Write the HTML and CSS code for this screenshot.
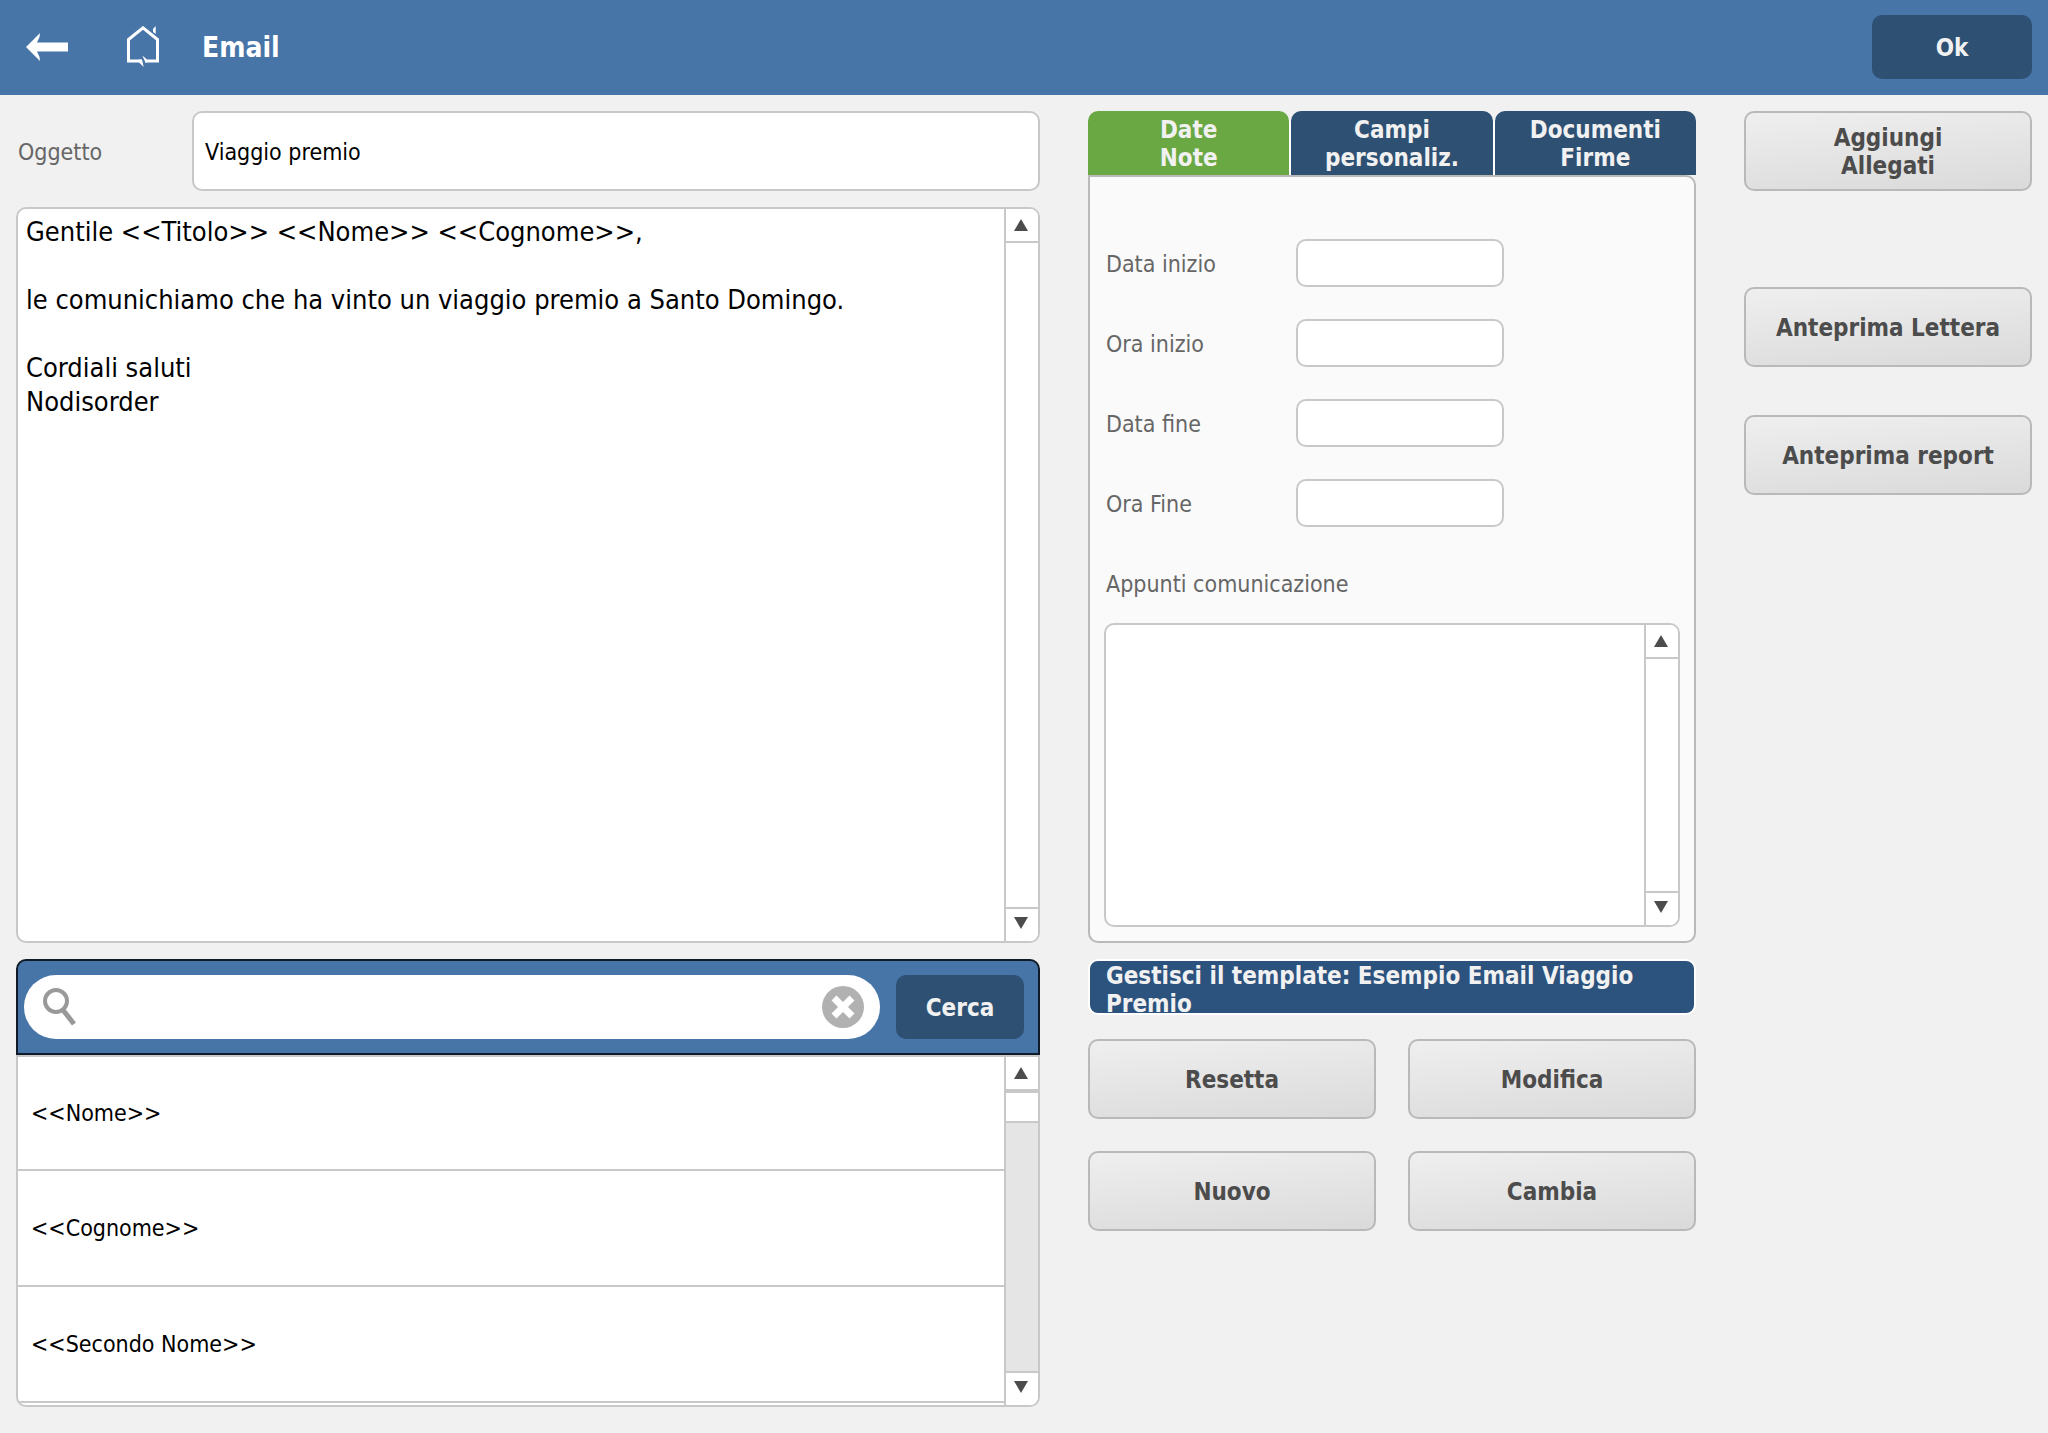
FILE: index.html
```
<!DOCTYPE html>
<html lang="it">
<head>
    <meta charset="UTF-8">
    <meta name="viewport" content="width=device-width, initial-scale=1.0">
    <title>Email</title>
    <link rel="stylesheet" href="styles.css">
</head>
<body>

<header class="topbar">
    <a class="icon-link" href="#" aria-label="Indietro">
        <svg width="42" height="28" viewBox="0 0 42 28"><path d="M0 14L14 0L13.500 4L11 9.500H42V18.500H11L13.500 24L14 28Z" fill="#fff"/></svg>
    </a>
    <a class="icon-link" href="#" aria-label="Home">
        <svg width="32" height="42" viewBox="0 0 32 42"><path d="M14.500 35H1.500V13.500L16 1.800L30.500 13.500V35H18" fill="none" stroke="#fff" stroke-width="3"/><path d="M15.300 29.500L20 33.500V36.500H18.500ZM12 33.500H15L16.700 41L12 36.500Z" fill="#fff"/><path d="M28.700 0V8L26 6V3Z" fill="#fff"/></svg>
    </a>
    <h1>Email</h1>
    <button class="btn-dark btn-ok" type="button">Ok</button>
</header>

<main class="layout">
    <section class="compose">
        <div class="subject">
            <label for="oggetto">Oggetto</label>
            <input class="field" type="text" id="oggetto" value="Viaggio premio">
        </div>
        <div class="scroll-box">
            <textarea class="message" aria-label="Testo email">Gentile &lt;&lt;Titolo&gt;&gt; &lt;&lt;Nome&gt;&gt; &lt;&lt;Cognome&gt;&gt;,

le comunichiamo che ha vinto un viaggio premio a Santo Domingo.

Cordiali saluti
Nodisorder</textarea>
            <div class="scrollbar">
                <button class="arrow" type="button" aria-label="Su"><svg width="14" height="12" viewBox="0 0 14 12"><path d="M7 0L14 12H0Z"/></svg></button>
                <div class="track"></div>
                <button class="arrow arrow-down" type="button" aria-label="Giù"><svg width="14" height="12" viewBox="0 0 14 12"><path d="M0 0H14L7 12Z"/></svg></button>
            </div>
        </div>
    </section>

    <section class="details">
        <div class="tabs">
            <button class="tab active" type="button">Date<br>Note</button>
            <button class="tab" type="button">Campi<br>personaliz.</button>
            <button class="tab" type="button">Documenti<br>Firme</button>
        </div>
        <div class="panel">
            <div class="dates">
                <label for="dataInizio">Data inizio</label>
                <input class="field" type="text" id="dataInizio">
                <label for="oraInizio">Ora inizio</label>
                <input class="field" type="text" id="oraInizio">
                <label for="dataFine">Data fine</label>
                <input class="field" type="text" id="dataFine">
                <label for="oraFine">Ora Fine</label>
                <input class="field" type="text" id="oraFine">
                <label class="notes-label" for="appunti">Appunti comunicazione</label>
            </div>
            <div class="scroll-box">
                <textarea id="appunti"></textarea>
                <div class="scrollbar">
                    <button class="arrow" type="button" aria-label="Su"><svg width="14" height="12" viewBox="0 0 14 12"><path d="M7 0L14 12H0Z"/></svg></button>
                    <div class="track"></div>
                    <button class="arrow arrow-down" type="button" aria-label="Giù"><svg width="14" height="12" viewBox="0 0 14 12"><path d="M0 0H14L7 12Z"/></svg></button>
                </div>
            </div>
        </div>
    </section>

    <aside class="actions">
        <button class="btn btn-attach" type="button">Aggiungi<br>Allegati</button>
        <button class="btn" type="button">Anteprima Lettera</button>
        <button class="btn" type="button">Anteprima report</button>
    </aside>

    <section class="merge-fields">
        <div class="search-bar">
            <div class="search">
                <svg width="34" height="40" viewBox="0 0 34 40"><circle cx="13" cy="14" r="11" fill="none" stroke="#999" stroke-width="4"/><path d="M20 23L31 37" stroke="#999" stroke-width="5"/></svg>
                <input type="text" aria-label="Cerca campo">
                <button class="clear" type="button" aria-label="Cancella">
                    <svg width="42" height="42" viewBox="0 0 42 42"><circle cx="21" cy="21" r="21" fill="#b1b1b1"/><path d="M12 12L30 30M30 12L12 30" stroke="#fff" stroke-width="7"/></svg>
                </button>
            </div>
            <button class="btn-dark btn-search" type="button">Cerca</button>
        </div>
        <div class="scroll-box list-box">
            <ul class="list">
                <li>&lt;&lt;Nome&gt;&gt;</li>
                <li>&lt;&lt;Cognome&gt;&gt;</li>
                <li>&lt;&lt;Secondo Nome&gt;&gt;</li>
            </ul>
            <div class="scrollbar">
                <button class="arrow" type="button" aria-label="Su"><svg width="14" height="12" viewBox="0 0 14 12"><path d="M7 0L14 12H0Z"/></svg></button>
                <div class="track track-active"><div class="thumb"></div></div>
                <button class="arrow arrow-down" type="button" aria-label="Giù"><svg width="14" height="12" viewBox="0 0 14 12"><path d="M0 0H14L7 12Z"/></svg></button>
            </div>
        </div>
    </section>

    <section class="template">
        <h2>Gestisci il template: Esempio Email Viaggio Premio</h2>
        <div class="template-buttons">
            <button class="btn" type="button">Resetta</button>
            <button class="btn" type="button">Modifica</button>
            <button class="btn" type="button">Nuovo</button>
            <button class="btn" type="button">Cambia</button>
        </div>
    </section>
</main>

</body>
</html>
```
FILE: styles.css
```
* {
    box-sizing: border-box;
}
body {
    margin: 0;
    min-height: 100vh;
    display: flex;
    flex-direction: column;
    background: #f1f1f1;
    color: #000;
    font-family: "DejaVu Sans Condensed", "Noto Sans", sans-serif;
    font-size: 23px;
    line-height: 28px;
}
button, input, textarea {
    font: inherit;
    color: inherit;
}
button {
    padding: 2px 0 0;
    border: none;
    cursor: pointer;
}
input, textarea {
    outline: none;
}
label {
    padding-top: 2px;
    color: #666;
}
svg {
    display: block;
}

/* top bar */
.topbar {
    display: flex;
    align-items: flex-start;
    height: 95px;
    padding: 15px 16px 0 26px;
    background: #4775a8;
    color: #fff;
}
.icon-link {
    display: flex;
    align-items: center;
    height: 64px;
    margin-right: 59px;
}
.icon-link + .icon-link {
    margin-right: 43px;
}
h1 {
    flex: 1;
    margin: 0;
    font-size: 28px;
    line-height: 66px;
}
.btn-dark {
    height: 64px;
    border-radius: 10px;
    background: #2e5073;
    color: #f1f1f1;
    font-size: 24px;
    font-weight: bold;
}
.btn-ok {
    width: 160px;
}

/* page grid */
.layout {
    flex: 1;
    display: grid;
    grid-template-columns: 1024fr 608fr 288fr;
    grid-template-rows: 1fr auto;
    gap: 16px 48px;
    padding: 16px 16px 26px;
}
.compose, .details, .actions {
    display: flex;
    flex-direction: column;
}
.field {
    border: 2px solid #c8c8c8;
    border-radius: 10px;
    background: #fff;
    padding: 2px 11px 0;
}

/* subject and message */
.compose {
    gap: 16px;
}
.subject {
    display: flex;
    align-items: center;
}
.subject label {
    width: 176px;
    padding-left: 2px;
}
.subject .field {
    flex: 1;
    height: 80px;
}
.scroll-box {
    flex: 1;
    display: flex;
    border: 2px solid #c8c8c8;
    border-radius: 10px;
    background: #fff;
    overflow: hidden;
}
.scroll-box textarea {
    flex: 1;
    border: none;
    resize: none;
    padding: 6px 8px;
    background: none;
}
.scroll-box .message {
    font-size: 27px;
    line-height: 34px;
}
.scrollbar {
    display: flex;
    flex-direction: column;
    width: 34px;
    border-left: 2px solid #c8c8c8;
}
.arrow {
    display: flex;
    align-items: center;
    justify-content: center;
    height: 32px;
    padding: 0 2px 0 0;
    background: #fff;
}
.arrow-down {
    padding-bottom: 4px;
}
.arrow path {
    fill: #4c4c4c;
}
.track {
    flex: 1;
    border-top: 2px solid #c8c8c8;
    border-bottom: 2px solid #c8c8c8;
}
.track-active {
    background: #e5e5e5;
}
.thumb {
    height: 32px;
    border-top: 2px solid #c8c8c8;
    border-bottom: 2px solid #c8c8c8;
    background: #fff;
}

/* tabs */
.tabs {
    display: grid;
    grid-template-columns: repeat(3, 1fr);
    gap: 2px;
    background: linear-gradient(#f1f1f1 10px, #fff 10px);
}
.tab {
    height: 64px;
    border-radius: 10px 10px 0 0;
    background: #2e5073;
    color: #f1f1f1;
    font-size: 24px;
    font-weight: bold;
}
.tab.active {
    background: #6aa844;
}
.panel {
    flex: 1;
    display: flex;
    flex-direction: column;
    padding: 62px 14px 14px;
    border: 2px solid #b9b9b9;
    border-radius: 0 10px 10px 10px;
    background: #fafafa;
}
.dates {
    display: grid;
    grid-template-columns: 190px 208px;
    align-items: center;
    row-gap: 32px;
    padding: 0 2px 16px;
}
.dates .field {
    height: 48px;
}
.dates .notes-label {
    grid-column: 1 / -1;
    line-height: 46px;
}

/* buttons */
.btn {
    height: 80px;
    border: 2px solid #b9b9b9;
    border-radius: 10px;
    background: linear-gradient(175deg, #efefef, #dadada);
    color: #4c4c4c;
    font-size: 24px;
    font-weight: bold;
}
.actions {
    gap: 48px;
}
.btn-attach {
    margin-bottom: 48px;
}

/* merge fields */
.search-bar {
    display: flex;
    gap: 16px;
    padding: 14px 14px 14px 6px;
    border: 2px solid #0f1b28;
    border-radius: 10px 10px 0 0;
    background: #4775a8;
}
.search {
    flex: 1;
    display: flex;
    align-items: center;
    height: 64px;
    padding: 0 16px 0 19px;
    border-radius: 32px;
    background: #fff;
}
.search input {
    flex: 1;
    border: none;
    background: none;
    padding: 0 12px;
}
.clear {
    padding: 0;
    background: none;
}
.btn-search {
    width: 128px;
}
.list-box {
    height: 352px;
    border-radius: 0 0 10px 10px;
}
.list {
    flex: 1;
    margin: 0;
    padding: 0;
    list-style: none;
}
.list li {
    display: flex;
    align-items: center;
    height: 116px;
    padding-left: 13px;
    border-bottom: 2px solid #c8c8c8;
}
.list li:first-child {
    height: 114px;
}

/* template */
.template h2 {
    height: 56px;
    margin: 0 0 24px;
    padding: 1px 16px 0;
    border: 2px solid #fff;
    border-radius: 10px;
    background: #2c527e;
    color: #f1f1f1;
    font-size: 24px;
    line-height: 28px;
    overflow: hidden;
}
.template-buttons {
    display: grid;
    grid-template-columns: 1fr 1fr;
    gap: 32px;
}
```
